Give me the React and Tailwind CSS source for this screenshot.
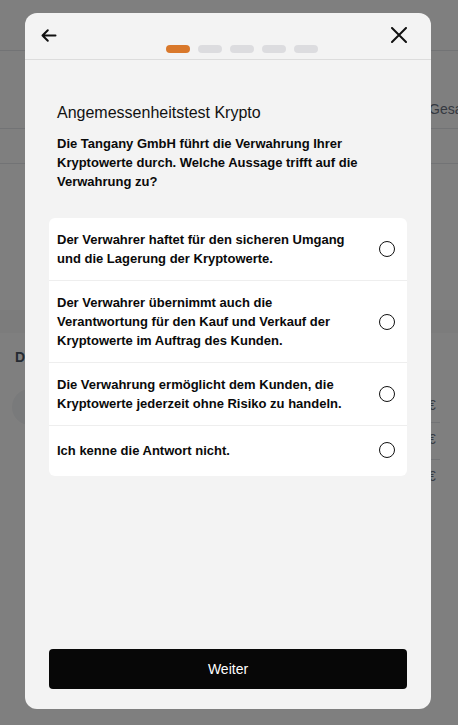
import React from 'react'

const options = [
    'Der Verwahrer haftet für den sicheren Umgang und die Lagerung der Kryptowerte.',
    'Der Verwahrer übernimmt auch die Verantwortung für den Kauf und Verkauf der Kryptowerte im Auftrag des Kunden.',
    'Die Verwahrung ermöglicht dem Kunden, die Kryptowerte jederzeit ohne Risiko zu handeln.',
    'Ich kenne die Antwort nicht.',
]

function BackgroundPage() {
    return (
        <div className="h-[725px] bg-white overflow-hidden">
            <div className="h-[51px] border-b border-gray-200" />
            <div className="h-[78px] border-b border-gray-200 flex items-end pb-[9px]">
                <span className="ml-[429px] text-sm text-gray-500 whitespace-nowrap">Gesamtwert</span>
            </div>
            <div className="h-[35px] border-b border-gray-200" />
            <div className="h-[146px]" />
            <div className="h-[23px] bg-[#f8f8f8]" />
            <div className="pl-[15px] pt-[14px] text-sm font-semibold text-gray-600">Depot</div>
            <div className="flex items-start justify-between mt-[22px]">
                <div className="ml-[12px] w-[36px] h-[36px] rounded-full bg-gray-100" />
                <div className="w-[30px] flex flex-col text-sm text-gray-500">
                    <div className="h-[34px] pt-[6px] border-b border-gray-200 w-[12px]">€</div>
                    <div className="h-[37px] pt-[6px] border-b border-gray-200 w-[12px]">€</div>
                    <div className="h-[34px] pt-[6px] w-[12px]">€</div>
                </div>
            </div>
        </div>
    )
}

function Radio() {
    return (
        <div className="w-4 h-6 flex items-center justify-center shrink-0">
            <div className="w-4 h-4 rounded-full border-[1.5px] border-[#111]" />
        </div>
    )
}

export default function App() {
    return (
        <div className="relative w-[458px] h-[725px] overflow-hidden font-['Liberation_Sans',Arial,sans-serif]">
            <BackgroundPage />

            <div className="absolute inset-0 bg-black/50 flex items-start pl-[25px] pt-[13px]">
                <div className="w-[406px] h-[696px] bg-[#f3f3f3] rounded-xl flex flex-col">
                    <header className="h-[47px] border-b border-[#dcdcdc] flex items-stretch pl-4 pr-6">
                        <div className="flex items-center pb-[3px]">
                            <svg width="16" height="16" viewBox="0 0 16 16" fill="none" stroke="#111" strokeWidth="2" strokeLinecap="round" strokeLinejoin="round">
                                <path d="M1.5 8.5h13M6.8 3.2L1.5 8.5l5.3 5.3" />
                            </svg>
                        </div>
                        <div className="flex-1 flex justify-center items-end pb-[6px] pl-[36px] gap-2">
                            <span className="w-6 h-2 rounded-full bg-[#d9782b]" />
                            <span className="w-6 h-2 rounded-full bg-[#dcdcdf]" />
                            <span className="w-6 h-2 rounded-full bg-[#dcdcdf]" />
                            <span className="w-6 h-2 rounded-full bg-[#dcdcdf]" />
                            <span className="w-6 h-2 rounded-full bg-[#dcdcdf]" />
                        </div>
                        <div className="flex items-center pb-[3px]">
                            <svg width="16" height="16" viewBox="0 0 16 16" fill="none" stroke="#111" strokeWidth="2" strokeLinecap="round">
                                <path d="M1 1l14 14M15 1L1 15" />
                            </svg>
                        </div>
                    </header>

                    <div className="flex-1 flex flex-col px-6 pb-5">
                        <div className="px-2 pt-[41px]">
                            <h1 className="text-base leading-6 text-[#111]">Angemessenheitstest Krypto</h1>
                            <p className="mt-[9px] text-[13px] leading-[19px] font-bold text-[#0a0a0a]">
                                Die Tangany GmbH führt die Verwahrung Ihrer Kryptowerte durch. Welche Aussage trifft auf die Verwahrung zu?
                            </p>
                        </div>

                        <div className="mt-[27px] bg-white rounded-md">
                            {options.map((text, i) => (
                                <div
                                    key={i}
                                    className={`flex items-center gap-4 pl-2 pr-3 py-3 ${i < options.length - 1 ? 'border-b border-[#eeeeee]' : 'pb-[14px]'}`}
                                >
                                    <p className="flex-1 text-[13px] leading-[19px] font-bold text-[#0a0a0a]">{text}</p>
                                    <Radio />
                                </div>
                            ))}
                        </div>

                        <button className="mt-auto h-10 w-full rounded bg-[#070707] text-white text-sm">
                            Weiter
                        </button>
                    </div>
                </div>
            </div>
        </div>
    )
}
